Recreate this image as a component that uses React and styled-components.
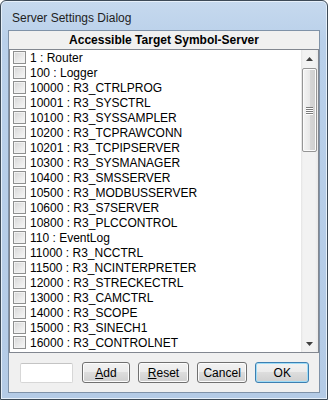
import React from "react";
import styled, { createGlobalStyle } from "styled-components";

const Global = createGlobalStyle`
  html, body { margin: 0; padding: 0; background: #ffffff; }
  body { font-family: "Liberation Sans", Arial, sans-serif; }
`;

const Window = styled.div`
  width: 328px;
  height: 400px;
  box-sizing: border-box;
  border: 1px solid #3d4a57;
  border-radius: 6px 6px 0 0;
  background: linear-gradient(to bottom, #c6d9ee 0px, #b9d0ea 40px, #b4cbe6 100%);
  box-shadow: inset 0 0 0 1px #e6f0fa;
  display: flex;
  flex-direction: column;
  overflow: hidden;
`;

const TitleBar = styled.div`
  height: 29px;
  flex: none;
  display: flex;
  align-items: center;
  padding-left: 11px;
  padding-top: 4px;
  font-size: 12px;
  color: #1e1e1e;
  box-sizing: border-box;
`;

const Client = styled.div`
  flex: 1;
  margin: 0 7px 6px 7px;
  background: #f0f0f0;
  border: 1px solid #7f92a8;
  display: flex;
  flex-direction: column;
  box-sizing: border-box;
`;

const Header = styled.div`
  height: 18px;
  flex: none;
  display: flex;
  align-items: center;
  justify-content: center;
  font-weight: bold;
  font-size: 12px;
  color: #000;
`;

const ListBox = styled.div`
  height: 304px;
  flex: none;
  border: 1px solid #828790;
  background: #ffffff;
  display: flex;
  box-sizing: border-box;
`;

const Items = styled.div`
  flex: 1;
  display: flex;
  flex-direction: column;
  overflow: hidden;
`;

const Row = styled.div`
  height: 15px;
  flex: none;
  display: flex;
  align-items: center;
  padding-left: 3px;
  gap: 4px;
  font-size: 12px;
  color: #000;
  white-space: nowrap;
`;

const Check = styled.span`
  width: 13px;
  height: 13px;
  box-sizing: border-box;
  border: 1px solid #8e8f8f;
  background: linear-gradient(135deg, #d6d6d6 0%, #e8e8e8 50%, #f8f8f8 100%);
  box-shadow: inset 0 0 0 1px #f2f2f2;
  flex: none;
`;

const ScrollBar = styled.div`
  width: 17px;
  flex: none;
  display: flex;
  flex-direction: column;
  background: linear-gradient(to right, #e4e4e4 0px, #f2f2f2 2px, #f2f2f2 14px, #e9e9e9 17px);
`;

const ArrowBtn = styled.div`
  height: 17px;
  flex: none;
  display: flex;
  align-items: center;
  justify-content: center;
`;

const Track = styled.div`
  flex: 1;
  display: flex;
  flex-direction: column;
  padding-top: 1px;
`;

const Thumb = styled.div`
  height: 84px;
  margin: 0 1px;
  box-sizing: border-box;
  border: 1px solid #959595;
  border-radius: 2px;
  background: linear-gradient(to right, #f4f4f4 0%, #e8e8e8 50%, #d6d6d6 51%, #cfcfcf 100%);
  box-shadow: inset 0 0 0 1px #fbfbfb;
  display: flex;
  flex-direction: column;
  align-items: center;
  justify-content: center;
  gap: 1px;
`;

const Grip = styled.span`
  width: 7px;
  height: 1px;
  background: #7a7a7a;
  box-shadow: 0 1px 0 #ffffff;
`;

const Footer = styled.div`
  flex: 1;
  display: flex;
  align-items: center;
  padding: 0 10px 0 11px;
  gap: 8px;
`;

const TextInput = styled.div`
  width: 53px;
  height: 20px;
  box-sizing: border-box;
  border: 1px solid #d7d7d7;
  border-top-color: #c4c4c4;
  border-radius: 2px;
  background: #ffffff;
  margin-right: 1px;
`;

const Button = styled.div`
  width: ${(p) => p.$w}px;
  height: 21px;
  box-sizing: border-box;
  border: 1px solid ${(p) => (p.$default ? "#3c7fb1" : "#707070")};
  border-radius: 3px;
  background: linear-gradient(to bottom, #f2f2f2 0%, #ebebeb 49%, #dddddd 50%, #cfcfcf 100%);
  box-shadow: inset 0 0 0 1px ${(p) => (p.$default ? "#9fdcf7" : "#fcfcfc")};
  display: flex;
  align-items: center;
  justify-content: center;
  font-size: 12px;
  color: #000;
`;

const U = styled.span`
  text-decoration: underline;
`;

const items = [
  "1 : Router",
  "100 : Logger",
  "10000 : R3_CTRLPROG",
  "10001 : R3_SYSCTRL",
  "10100 : R3_SYSSAMPLER",
  "10200 : R3_TCPRAWCONN",
  "10201 : R3_TCPIPSERVER",
  "10300 : R3_SYSMANAGER",
  "10400 : R3_SMSSERVER",
  "10500 : R3_MODBUSSERVER",
  "10600 : R3_S7SERVER",
  "10800 : R3_PLCCONTROL",
  "110 : EventLog",
  "11000 : R3_NCCTRL",
  "11500 : R3_NCINTERPRETER",
  "12000 : R3_STRECKECTRL",
  "13000 : R3_CAMCTRL",
  "14000 : R3_SCOPE",
  "15000 : R3_SINECH1",
  "16000 : R3_CONTROLNET",
];

const Arrow = ({ up }) => (
  <svg width="7" height="4" viewBox="0 0 7 4">
    {up ? (
      <path d="M3.5 0 L7 4 L0 4 Z" fill="#404040" />
    ) : (
      <path d="M0 0 L7 0 L3.5 4 Z" fill="#404040" />
    )}
  </svg>
);

export default function App() {
  return (
    <>
      <Global />
      <Window>
        <TitleBar>Server Settings Dialog</TitleBar>
        <Client>
          <Header>Accessible Target Symbol-Server</Header>
          <ListBox>
            <Items>
              {items.map((t) => (
                <Row key={t}>
                  <Check />
                  <span>{t}</span>
                </Row>
              ))}
            </Items>
            <ScrollBar>
              <ArrowBtn>
                <Arrow up />
              </ArrowBtn>
              <Track>
                <Thumb>
                  <Grip />
                  <Grip />
                  <Grip />
                  <Grip />
                </Thumb>
              </Track>
              <ArrowBtn>
                <Arrow />
              </ArrowBtn>
            </ScrollBar>
          </ListBox>
          <Footer>
            <TextInput />
            <Button $w={49}>
              <span><U>A</U>dd</span>
            </Button>
            <Button $w={51}>
              <span><U>R</U>eset</span>
            </Button>
            <Button $w={51}>Cancel</Button>
            <Button $w={54} $default>OK</Button>
          </Footer>
        </Client>
      </Window>
    </>
  );
}
